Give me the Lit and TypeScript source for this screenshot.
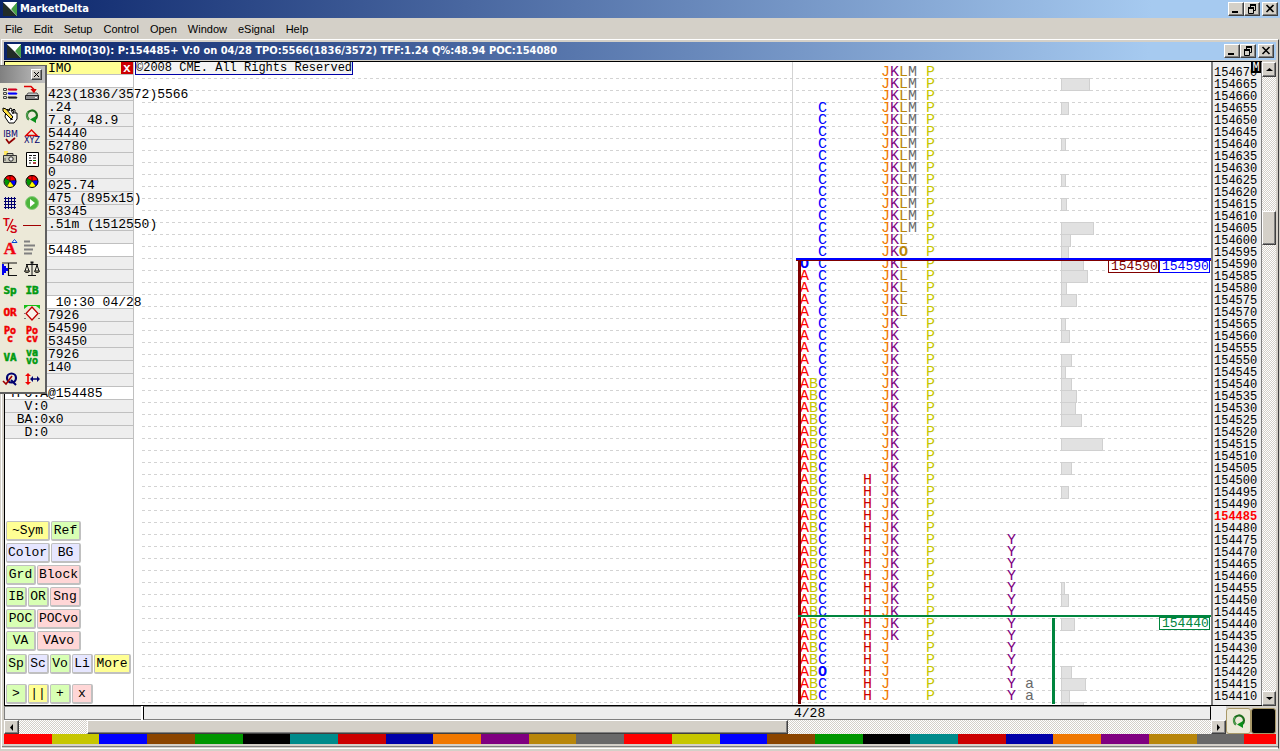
import { LitElement, html, svg, css, nothing } from "lit";
import { customElement } from "lit/decorators.js";
import { classMap } from "lit/directives/class-map.js";

const ROW_COUNT = 54;
const TOP_PRICE = 154670;
const TICK = 5;
const LAST_PRICE = 154485;

interface Bracket {
  letter: string;
  column: number;
  from: number;
  to: number;
}

/* Price rows (counted from the top) that each half-hour bracket traded in. */
const BRACKETS: Bracket[] = [
  { letter: "A", column: 0, from: 17, to: 52 },
  { letter: "B", column: 1, from: 26, to: 52 },
  { letter: "C", column: 2, from: 3, to: 52 },
  { letter: "H", column: 7, from: 34, to: 52 },
  { letter: "J", column: 9, from: 0, to: 52 },
  { letter: "K", column: 10, from: 0, to: 47 },
  { letter: "L", column: 11, from: 0, to: 20 },
  { letter: "M", column: 12, from: 0, to: 13 },
  { letter: "P", column: 14, from: 0, to: 52 },
  { letter: "Y", column: 23, from: 39, to: 52 },
  { letter: "a", column: 25, from: 51, to: 52 },
];

/* Opening prints replace the bracket letter with an O. */
const OPENS: Record<string, string> = { "16:0": "C", "15:11": "L", "50:2": "C" };

const VOLUME: Record<number, number> = {
  154665: 29, 154655: 8, 154640: 5, 154625: 5, 154615: 6, 154605: 33,
  154600: 10, 154595: 8, 154590: 23, 154585: 27, 154580: 6, 154575: 16,
  154565: 5, 154560: 9, 154550: 11, 154545: 5, 154540: 11, 154535: 16,
  154530: 15, 154525: 21, 154515: 42, 154505: 11, 154495: 8, 154455: 4,
  154450: 8, 154440: 14, 154420: 11, 154415: 25, 154410: 9, 154405: 23,
};

const PALETTE = [
  "#ff0000", "#c6c600", "#0000ff", "#8b4500", "#009600", "#000000", "#008b8b",
  "#cc0000", "#0000a8", "#f07800", "#800080", "#b8860b", "#696969",
];

type Fact = [text: string, kind?: string];
const FACTS: Fact[] = [
  ["", "plain"], ["423(1836/3572)5566"], [".24"], ["7.8, 48.9"], ["54440"],
  ["52780"], ["54080"], ["0"], ["025.74"], ["475 (895x15)"], ["53345"],
  [".51m (1512550)"], [""], ["54485", "plain"], [""], [""], [""],
  [" 10:30 04/28", "plain"], ["7926"], ["54590"], ["53450"], ["7926"],
  ["140"], [""], ["TPO:A@154485", "plain wide"], ["  V:0", "wide"],
  [" BA:0x0", "wide"], ["  D:0", "wide"],
];

type Key = [label: string, tone: string, size: string];
const KEYS: Key[][] = [
  [["~Sym", "yellow", "l"], ["Ref", "green", "m"]],
  [["Color", "blue", "l"], ["BG", "blue", "m"]],
  [["Grd", "green", "m"], ["Block", "pink", "l"]],
  [["IB", "green", "s"], ["OR", "green", "s"], ["Sng", "pink", "m"]],
  [["POC", "green", "m"], ["POCvo", "pink", "l"]],
  [["VA", "green", "m"], ["VAvo", "pink", "l"]],
  [["Sp", "green", "s"], ["Sc", "blue", "s"], ["Vo", "green", "s"], ["Li", "blue", "s"], ["More", "yellow", "x"]],
  [[">", "green", "s"], ["||", "yellow", "s"], ["+", "green", "s"], ["x", "pink", "s"]],
];

const word = (text: string, x: number, y: number, fill: string, size = 10) => svg`
  <text x=${x} y=${y} fill=${fill} stroke=${fill} stroke-width="0.5" font-family="DejaVu Sans Mono, monospace"
    font-weight="bold" font-size=${size} text-anchor="middle">${text}</text>`;

const pie = (cx: number) => svg`
  <path d="M${cx} 10V4A6 6 0 0 1 ${cx + 6} 9z" fill="#f00"/>
  <path d="M${cx} 10V4A6 6 0 0 0 ${cx - 5} 7z" fill="#f00"/>
  <path d="M${cx} 10L${cx - 5} 7A6 6 0 0 0 ${cx - 3} 15z" fill="#009600"/>
  <path d="M${cx} 10L${cx - 3} 15A6 6 0 0 0 ${cx + 4} 15z" fill="#ff0"/>
  <path d="M${cx} 10L${cx + 4} 15A6 6 0 0 0 ${cx + 6} 9z" fill="#00f"/>
  <path d="M${cx} 4v6l-5-3M${cx} 10l-3 5M${cx} 10l4 5M${cx} 10l6-1" fill="none" stroke="#000" stroke-width="0.6"/>
  <circle cx=${cx} cy="10.5" r="6" fill="none" stroke="#000"/>`;

const refresh = svg`
  <path d="M8 14.500A5 5 0 1 1 14.500 14" fill="none" stroke="#1c6e1c" stroke-width="2.200"/>
  <path d="M8 14.500A5 5 0 0 1 7 7" fill="none" stroke="#5aa85a" stroke-width="1.200"/>
  <path d="M9 14.500l6-3.500v7z" fill="#0a8f1a"/>`;

const TOOLS: [string, unknown][] = [
  ["Legend", svg`
    <g fill="none" stroke="#444"><path d="M3.500 5.500h3v2h-3zM3.500 9.500h3v2h-3zM3.500 13.500h3v2h-3z"/></g>
    <g fill="none" stroke-width="1.500">
      <path d="M8 7l1-1 1 1 1-1 1 1 1-1 1 1 1-1 1 1 1-1" stroke="#d00020"/>
      <path d="M8 11l1-1 1 1 1-1 1 1 1-1 1 1 1-1 1 1 1-1" stroke="#0000ff"/>
      <path d="M8 15l1-1 1 1 1-1 1 1 1-1 1 1 1-1 1 1 1-1" stroke="#222"/>
    </g>`],
  ["Import data", svg`
    <path d="M3 3.500h7l3 3" fill="none" stroke="#d00" stroke-width="1.500"/><path d="M9.500 6h6L13 10z" fill="#d00"/>
    <path d="M7 10h9l2 3H5z" fill="#c8c8c8" stroke="#555"/><path d="M4.500 12.500h13v4h-13z" fill="#8c8c8c" stroke="#222"/>
    <path d="M9.500 6h6L13 10z" fill="#d00"/><path d="M14 14.500h2" stroke="#fff"/>`],
  ["Edit by hand", svg`
    <path d="M6 6l2-2 1 2 1-3 2 1 0 2 2-2 1 1 0 3 2 0 0 6-3 4H9l-4-6z" fill="#fff" stroke="#000"/>
    <path d="M3 3l3 1 7 8-2 2-8-8z" fill="#ffe040" stroke="#000"/><path d="M11 5l2 4M13 5l1 4M10 15l3-1" stroke="#000"/>`],
  ["Refresh", refresh],
  ["Symbol", svg`
    <text x="10.500" y="10" font-family="DejaVu Sans, sans-serif" font-size="8" fill="#00006e" text-anchor="middle">IBM</text>
    <path d="M6 12l3 4 6-5" fill="none" stroke="#900000" stroke-width="1.700"/>`],
  ["Formula", svg`
    <path d="M5 8.500L10.500 3l5.500 5.500z" fill="none" stroke="#e00000" stroke-width="1.400"/>
    <text x="11" y="16" font-family="DejaVu Sans, sans-serif" font-size="8" fill="#00006e" text-anchor="middle">XYZ</text>`],
  ["Snapshot", svg`
    <path d="M4 2h4v4H4z" fill="#ffe860"/><path d="M3.500 6.500h13v7h-13zM7 4.500h6v2H7z" fill="#c8c8b8" stroke="#333"/>
    <circle cx="11" cy="10" r="2.200" fill="#eee" stroke="#222"/><path d="M5 9v3" stroke="#555"/>`],
  ["Report", svg`
    <path d="M5.500 3.500h12v14h-12z" fill="#fff" stroke="#000"/>
    <path d="M8 6.500h3m1 0h3M8 9h2m2 0h3M8 11.500h3m1 0h3M8 14h2m2 0h3" stroke="#111"/><path d="M12 14h3" stroke="#d00"/><path d="M12 11.500h3" stroke="#080"/>`],
  ["Chart colors", pie(10)],
  ["Bracket colors", pie(11)],
  ["Grid", svg`<path d="M5.500 4v12M8.500 4v12M11.500 4v12M14.500 4v12M4 5.500h12M4 8.500h12M4 11.500h12M4 14.500h12" stroke="#00006e"/>`],
  ["Play", svg`
    <circle cx="11" cy="10" r="6.500" fill="#4cb53c" stroke="#8ccc80"/><path d="M9 6l5 4-5 4z" fill="#fff"/>`],
  ["Time and sales", svg`
    <g font-family="Liberation Sans, sans-serif" font-weight="bold" font-size="11" fill="#d00010">
      <text x="3" y="11">T</text><text x="10" y="18">S</text></g>
    <path d="M13 4L7 16" stroke="#d00010" stroke-width="1.300"/>`],
  ["Line", svg`<path d="M2 10.500h18" stroke="#a00000"/>`],
  ["Text", svg`
    <text x="10" y="17" font-family="Liberation Serif, serif" font-weight="bold" font-size="17" fill="#f00010" stroke="#f00010" stroke-width="0.4" text-anchor="middle">A</text>
    <path d="M12 5.500l2.500-3 2.500 3z" fill="#fff" stroke="#0040d0"/>`],
  ["Profile", svg`<path d="M3 4.500h6M3 8.500h11M3 12.500h9M3 16.500h8" stroke="#808080" stroke-width="2"/>`],
  ["Histogram", svg`
    <path d="M2 5h2v2h2v2h2v3H6v2H4v2H2z" fill="#0000f0"/><path d="M17 4H8.500v12.500H17M8 9.500h4" fill="none" stroke="#111" stroke-width="1.200"/><path d="M2 4h6" stroke="#222"/>`],
  ["Balance", svg`
    <path d="M11 3v13M7 16.500h8M5 5.500h12M6 6l-2 6M6 6l2 6M16 6l-2 6M16 6l2 6" fill="none" stroke="#111"/>
    <path d="M3.500 12h5c0 2-5 2-5 0zM13.500 12h5c0 2-5 2-5 0z" fill="#e8e0b0" stroke="#111"/><path d="M9.500 3.500h3" stroke="#111" stroke-width="2"/>`],
  ["Single prints", word("Sp", 10, 13, "#009a10", 11)],
  ["Initial balance", word("IB", 11, 13, "#009a10", 11)],
  ["Opening range", word("OR", 10, 13, "#f00000", 11)],
  ["Rotation", svg`
    <path d="M3 2h16v4l-4-3H7L3 6z" fill="#18c018"/>
    <path d="M11 4l6 6.500-6 6.500-6-6.500z" fill="#f8f4ec" stroke="#c00000" stroke-width="1.300"/>
    <path d="M3 15.500h2M17 15.500h2M3 10.500h1M18 10.500h1" stroke="#777"/>`],
  ["Point of control", svg`${word("Po", 10, 9, "#f00000")}${word("c", 10, 17, "#f00000")}`],
  ["Volume point of control", svg`${word("Po", 11, 9, "#f00000")}${word("cv", 11, 17, "#f00000")}`],
  ["Value area", word("VA", 10, 14, "#009a10", 11)],
  ["Volume value area", svg`${word("va", 11, 9, "#009a10")}${word("vo", 11, 17, "#009a10")}`],
  ["Quote check", svg`
    <circle cx="11.500" cy="9" r="4.500" fill="none" stroke="#00006e" stroke-width="2.200"/><path d="M11 11l5 5" stroke="#00006e" stroke-width="2"/>
    <path d="M3 12l3 3 6-8" fill="none" stroke="#a00000" stroke-width="1.600"/>`],
  ["Scale", svg`
    <path d="M7 6v8" stroke="#f00000" stroke-width="1.600"/><path d="M4 7l3-3 3 3zM4 13l3 3 3-3z" fill="#f00000"/>
    <path d="M10 10h8" stroke="#00006e" stroke-width="1.500"/><path d="M12 7l-3 3 3 3zM16 7l3 3-3 3z" fill="#00006e"/>`],
];

const logo = html`<svg class="logo" viewBox="0 0 14 14" aria-hidden="true">
  <rect width="14" height="14" fill="#fff"/><path d="M0 0v14h14z" fill="#222c28"/><path d="M14 0v14L8 7z" fill="#46a046"/><path d="M0 0h14L8 7z" fill="#fff"/>
</svg>`;

const arrow = (d: string) => html`<svg viewBox="0 0 7 7" width="7" height="7" aria-hidden="true"><path d=${d} fill="#000"/></svg>`;

const windowButtons = html`<div class="sysbuttons">
  <button class="sys" aria-label="Minimize"><svg viewBox="0 0 12 10"><path d="M2 8h6" stroke="#000" stroke-width="2"/></svg></button>
  <button class="sys" aria-label="Restore"><svg viewBox="0 0 12 10"><path d="M4 1h6M2 4h6" stroke="#000" stroke-width="2"/><path d="M4.500 1v3M9.500 1v5.500H8M2.500 4v5.500h5V4" fill="none" stroke="#000"/></svg></button>
  <button class="sys close" aria-label="Close"><svg viewBox="0 0 12 10"><path d="M2.500 1l7 7M9.500 1l-7 7" stroke="#000" stroke-width="1.600"/></svg></button>
</div>`;

@customElement("app-root")
export class AppRoot extends LitElement {
  static styles = css`
    :host {
      display: flex;
      flex-direction: column;
      height: 100vh;
      overflow: hidden;
      position: relative;
      background: #d4d0c8;
      color: #000;
      font: 13px/12px "Liberation Mono", monospace;
    }
    * { box-sizing: border-box; }
    button { margin: 0; padding: 0; border: 0; font: inherit; color: inherit; border-radius: 0; }
    svg { display: block; flex: none; }
    .title {
      display: flex;
      align-items: center;
      height: 18px;
      flex: none;
      padding: 0 2px 0 3px;
      gap: 3px;
      color: #fff;
      font: bold 11px/18px "DejaVu Sans Condensed", "DejaVu Sans", sans-serif;
      background: linear-gradient(to right, #0a246a, #a6caf0 90%);
    }
    .title.child { margin-bottom: 1px; }
    .title h1, .title h2 { margin: 0; font: inherit; flex: 1; white-space: nowrap; }
    .logo { width: 14px; height: 14px; }
    .sysbuttons { display: flex; }
    .sys {
      width: 16px;
      height: 14px;
      background: #d4d0c8;
      border: 1px solid;
      border-color: #fff #404040 #404040 #fff;
      box-shadow: inset -1px -1px #808080;
    }
    .sys svg { width: 12px; height: 10px; margin: 1px; }
    .close { margin-left: 2px; }
    .menu {
      display: flex;
      align-items: center;
      flex: none;
      height: 21px;
      padding: 0 5px;
      gap: 11px;
      font: 11px/14px "Liberation Sans", sans-serif;
    }
    .menu a { color: #000; text-decoration: none; }
    .window {
      flex: 1;
      min-height: 0;
      display: flex;
      flex-direction: column;
      margin: 0 1px 2px;
      padding: 2px 2px 4px;
      border: 1px solid;
      border-color: #fff #404040 #fff #fff;
      box-shadow: inset 0 -1px #d4d0c8, inset 0 -2px #808080;
    }
    .work { flex: 1; min-height: 0; display: flex; }
    .sheet {
      flex: 1;
      min-width: 0;
      display: flex;
      background: #fff;
      border: 1px solid #000;
      border-right: 0;
    }

    /* left information panel */
    .panel {
      width: 129px;
      flex: none;
      display: flex;
      flex-direction: column;
      border-right: 1px solid #c0c0c0;
      position: relative;
      z-index: 1;
    }
    .symbol { display: flex; height: 13px; flex: none; background: #ffff94; border-bottom: 1px solid #c0c0c0; line-height: 13px; }
    .symbol span { flex: 1; padding-left: 43px; }
    .symbol button { width: 12px; background: #cc0000; color: #fff; font-weight: bold; }
    .fact {
      height: 13px;
      flex: none;
      padding-left: 43px;
      white-space: pre;
      background: #eee;
      border-bottom: 1px solid #c0c0c0;
      line-height: 13px;
    }
    .fact.plain { background: #fff; }
    .fact.wide { padding-left: 4px; }
    .keys { margin: auto 0 1px 1px; display: flex; flex-direction: column; gap: 2px; }
    .keyrow { display: flex; gap: 1px; }
    .keyrow:nth-child(7) { margin-top: 1px; }
    .keyrow:nth-child(8) { margin-top: 8px; }
    .key {
      height: 20px;
      border: 1px solid #c0c0c0;
      border-width: 1px 2px 2px 1px;
      border-radius: 2px;
      white-space: nowrap;
    }
    .s { width: 21px; } .m { width: 30px; } .l { width: 44px; } .x { width: 37px; }
    .keyrow:nth-child(4) .m { width: 31px; }
    .yellow { background: #ffff94; } .green { background: #d8ffb4; }
    .blue { background: #e6e6ff; } .pink { background: #ffd6d6; }

    /* price chart */
    .chart { flex: 1; min-width: 0; position: relative; overflow: hidden; padding-top: 4px; }
    .notice {
      position: absolute; top: 0; left: 1px; z-index: 1;
      font-size: 12px; line-height: 12px; white-space: nowrap;
      border: 1px solid #0000a8; border-top: 0; background: #f4f4f4;
    }
    .row { height: 12px; display: flex; margin: 0 4px 0 8px; }
    .row.lined { background: repeating-linear-gradient(to right, #d3d3d3 0 3px, transparent 3px 6px) top left / 100% 1px no-repeat; }
    .letters { display: grid; grid-template-columns: repeat(27, 9px); margin-left: auto; font-size: 15px; line-height: 14px; }
    .volume { width: 146px; margin-left: 18px; }
    .bar { height: 13px; background: #e1e1e1; border: 1px solid #d0d0d0; }
    .A { color: #f00; } .B, .P { color: #c6c600; } .C { color: #00f; } .H { color: #c00; }
    .J { color: #f07800; } .K, .Y { color: #800080; } .L { color: #b8860b; } .M, .a { color: #696969; }
    .open { font-weight: bold; }
    .mark { position: absolute; }
    .session { right: 418px; top: 0; bottom: 0; width: 1px; background: #d3d3d3; }
    .high { right: 0; top: 196px; width: 415px; height: 3px; background: #0000ff; border-bottom: 1px solid #800000; }
    .range { right: 410px; top: 199px; bottom: 1px; width: 3px; background: #800000; }
    .low { right: 0; top: 553px; width: 413px; height: 2px; background: #00853e; }
    .late { right: 156px; top: 556px; bottom: 1px; width: 3px; background: #00853e; }
    .tags { position: absolute; right: 1px; display: flex; }
    .tags.upper { top: 198px; } .tags.lower { top: 555px; }
    .tag { width: 51px; height: 13px; border: 1px solid; background: #fff; padding-left: 2px; line-height: 12px; }
    .maroon { color: #800000; } .navy { color: #0000ff; } .sea { color: #00853e; }

    .axis {
      width: 51px; flex: none; overflow: hidden; position: relative;
      padding: 4px 0 0 1px; background: #eee;
      border-left: 2px solid #808080; border-right: 1px solid #808080;
      font-size: 12px;
    }
    .axis div { height: 12px; line-height: 14px; }
    .axis .last { color: #f00; font-weight: bold; }
    .mode {
      position: absolute; right: 0; top: 0; width: 10px; height: 11px; z-index: 1;
      background: #000; color: #fff; text-align: center; line-height: 12px;
    }

    /* scroll bars */
    .vscroll { width: 14px; flex: none; display: flex; flex-direction: column; }
    .hscroll { height: 14px; display: flex; flex: none; }
    .track { background: repeating-conic-gradient(#fff 0 25%, #d4d0c8 0 50%) 0 0 / 2px 2px; }
    .step, .thumb {
      background: #d4d0c8; border: 1px solid; border-color: #fff #404040 #404040 #fff;
      box-shadow: inset -1px -1px #808080;
      display: flex; align-items: center; justify-content: center; flex: none;
    }
    .vscroll .step { height: 15px; margin-top: 1px; }
    .vscroll .step:last-child { margin-top: 0; }
    .hscroll .step { width: 15px; }
    .t1 { flex: 134; } .t2 { flex: 446; } .vscroll .thumb { height: 34px; }
    .h1 { flex: 68; } .h2 { flex: 701; } .h3 { flex: 424; }

    .foot { display: flex; flex: none; height: 28px; }
    .footmain { flex: 1; min-width: 0; display: flex; flex-direction: column; }
    .status { display: flex; height: 14px; background: #fff; }
    .status div { background: #eee; border: 1px solid #808080; border-right: 0; }
    .note { width: 137px; margin-right: 2px; }
    .status .dates { flex: 1; border-left: 1px solid #000; border-right: 1px solid #000; display: flex; justify-content: flex-end; }
    .dates span { width: 416px; line-height: 14px; }
    .corner { width: 15px; display: flex; flex-direction: column; background: #eee; }
    .corner .step { width: 15px; height: 14px; margin-top: 14px; }
    .square { width: 25px; height: 26px; margin-top: 2px; background: #ece9d8; border: 1px solid #a89868; border-radius: 3px; display: flex; align-items: center; justify-content: center; }
    .square.black { background: #000; }
    .swatches { display: flex; height: 10px; flex: none; }
    .swatches i { flex: 3 3 0; }
    .swatches i:last-child { flex: 2 2 0; }

    /* floating tool palette */
    .tools {
      position: absolute; left: 0; top: 65px; width: 47px;
      background: #ece9d8; border: solid #606060; border-width: 1px 2px 2px 0; z-index: 2;
      box-shadow: inset 0 1px #fff;
      padding-bottom: 1px;
    }
    .grip { height: 17px; display: flex; align-items: center; justify-content: flex-end; padding-right: 3px; background: linear-gradient(to right, #808080, #c0c0c0); }
    .grip .sys { width: 11px; height: 11px; display: flex; align-items: center; justify-content: center; }
    .grip .sys svg { width: 7px; height: 7px; margin: 0; }
    .toolgrid { display: grid; grid-template-columns: 21px 21px; }
    .tool { height: 22px; width: 21px; background: none; }
    .tool svg { width: 21px; height: 22px; }
  `;

  private letters(row: number) {
    const printed = BRACKETS.filter((b) => row >= b.from && row <= b.to).map((b) => ({ ...b, open: false }));
    for (const [key, tone] of Object.entries(OPENS)) {
      const [r, column] = key.split(":").map(Number);
      if (r !== row) continue;
      const found = printed.find((b) => b.column === column);
      if (found) found.open = true;
      else printed.push({ letter: tone, column, from: r, to: r, open: true });
    }
    return printed.map(
      (b) => html`<span class=${classMap({ [b.letter]: true, open: b.open })} style="grid-column:${b.column + 1};grid-row:1">${b.open ? "O" : b.letter}</span>`
    );
  }

  render() {
    const rows = Array.from({ length: ROW_COUNT }, (_, i) => i);
    return html`
      <header class="title">${logo}<h1>MarketDelta</h1>${windowButtons}</header>
      <nav class="menu">
        ${["File", "Edit", "Setup", "Control", "Open", "Window", "eSignal", "Help"].map((m) => html`<a href="#">${m}</a>`)}
      </nav>
      <main class="window">
        <div class="title child">${logo}<h2>RIM0: RIM0(30): P:154485+ V:0 on 04/28 TPO:5566(1836/3572) TFF:1.24 Q%:48.94 POC:154080</h2>${windowButtons}</div>
        <div class="work">
          <div class="sheet">
            <aside class="panel">
              <div class="symbol"><span>IMO</span><button aria-label="Close symbol">x</button></div>
              ${FACTS.map(([text, kind]) => html`<div class="fact ${kind ?? ""}">${text}</div>`)}
              <div class="keys">
                ${KEYS.map((line) => html`<div class="keyrow">${line.map(([label, tone, size]) => html`<button class="key ${tone} ${size}">${label}</button>`)}</div>`)}
              </div>
            </aside>
            <section class="chart">
              <div class="mark session"></div>
              <div class="notice">©2008 CME. All Rights Reserved</div>
              ${rows.map((i) => {
                const width = VOLUME[TOP_PRICE - i * TICK];
                return html`<div class=${classMap({ row: true, lined: i > 0 })}>
                  <div class="letters">${this.letters(i)}</div>
                  <div class="volume">${width ? html`<div class="bar" style="width:${width}px"></div>` : nothing}</div>
                </div>`;
              })}
              <div class="mark range"></div>
              <div class="mark high"></div>
              <div class="mark low"></div>
              <div class="mark late"></div>
              <div class="tags upper"><span class="tag maroon">154590</span><span class="tag navy">154590</span></div>
              <div class="tags lower"><span class="tag sea">154440</span></div>
            </section>
            <div class="axis">
              ${rows.slice(0, -1).map((i) => {
                const price = TOP_PRICE - i * TICK;
                return html`<div class=${price === LAST_PRICE ? "last" : ""}>${price}</div>`;
              })}
              <span class="mode">M</span>
            </div>
          </div>
          <div class="vscroll">
            <button class="step" aria-label="Scroll up">${arrow("M0 5h7L3.500 2z")}</button>
            <div class="track t1"></div><div class="thumb"></div><div class="track t2"></div>
            <button class="step" aria-label="Scroll down">${arrow("M0 2h7L3.500 5z")}</button>
          </div>
        </div>
        <div class="foot">
          <div class="footmain">
            <div class="status"><div class="note"></div><div class="dates"><span>4/28</span></div></div>
            <div class="hscroll">
              <button class="step" aria-label="Scroll left">${arrow("M5 0v7L2 3.500z")}</button>
              <div class="track h1"></div><div class="thumb h2"></div><div class="track h3"></div>
            </div>
          </div>
          <div class="corner"><button class="step" aria-label="Scroll right">${arrow("M2 0v7l3-3.500z")}</button></div>
          <button class="square" aria-label="Refresh chart"><svg width="21" height="22" viewBox="0 0 21 22">${refresh}</svg></button>
          <button class="square black" aria-label="Background color"></button>
        </div>
        <div class="swatches">
          ${Array.from({ length: 27 }, (_, i) => html`<i style="background:${PALETTE[i % PALETTE.length]}"></i>`)}
        </div>
      </main>
      <div class="tools">
        <div class="grip"><button class="sys" aria-label="Close tools"><svg viewBox="0 0 7 7"><path d="M1 1l5 5M6 1L1 6" stroke="#000"/></svg></button></div>
        <div class="toolgrid">
          ${TOOLS.map(([name, art]) => html`<button class="tool" aria-label=${name}><svg viewBox="0 0 21 22">${art}</svg></button>`)}
        </div>
      </div>
    `;
  }
}
